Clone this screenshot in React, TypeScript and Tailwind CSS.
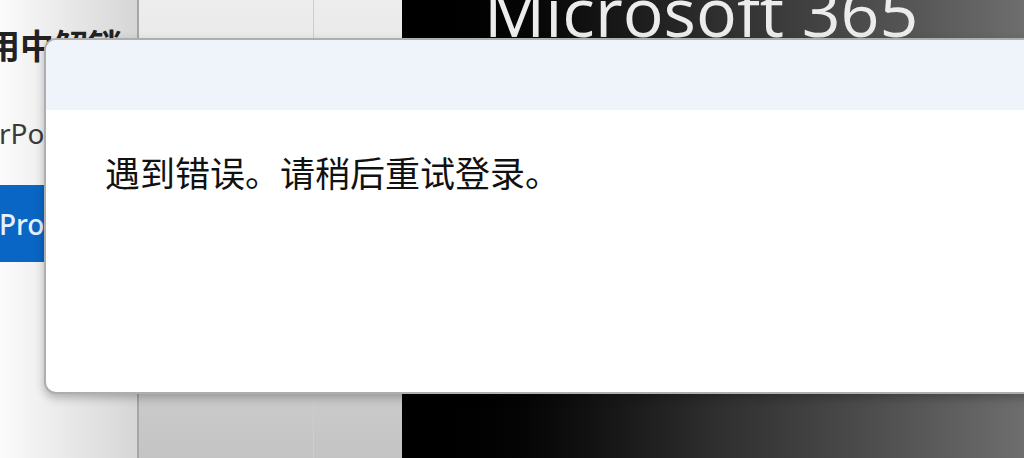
export default function App() {
  return (
    <main className="relative h-[458px] w-[1024px] overflow-hidden bg-white font-['Noto_Sans','Noto_Sans_CJK_SC',sans-serif]">
      {/* 背景：左侧面板 / 中间栏 / 右侧深色横幅 */}
      <div className="flex h-full w-full">
        <div className="flex h-full w-[137px] shrink-0 flex-col overflow-hidden bg-gradient-to-r from-[#fbfbfb] to-[#d6d6d6]">
          <div className="-ml-[14px] mt-[21px] whitespace-nowrap text-[34px] font-bold leading-[48px] text-[#222] font-['Noto_Sans_CJK_SC',sans-serif]">
            用中解锁
          </div>
          <div className="-ml-[1px] mt-[46px] whitespace-nowrap text-[28px] leading-[36px] text-[#3a3a3a]">rPo</div>
          <div className="mt-[34px] flex h-[77px] w-full items-center bg-[#0a66c4]">
            <span className="-ml-[1px] whitespace-nowrap text-[28px] font-medium text-[#e8f0fb]">Pro</span>
          </div>
        </div>
        <div className="h-full w-[2px] shrink-0 bg-[#a6a6a6]" />
        <div className="flex h-full w-[263px] shrink-0 bg-gradient-to-b from-[#ededed] via-[#dcdcdc] to-[#c4c4c4]">
          <div className="h-full w-[175px] border-r border-[#cdcdcd]" />
          <div className="h-full flex-1" />
        </div>
        <div className="relative h-full flex-1 overflow-hidden bg-gradient-to-r from-[#000000] via-[#2e2e2e] to-[#6e6e6e]">
          <div className="-mt-[35px] ml-[82px] whitespace-nowrap font-['Open_Sans',sans-serif] text-[68px] leading-[92px] text-[#ececec]">
            Microsoft 365
          </div>
        </div>
      </div>

      {/* 错误对话框 */}
      <div className="absolute left-[44px] top-[38px] flex h-[356px] w-[1000px] flex-col overflow-hidden rounded-l-[12px] border-2 border-[#8c8c8c]/70 bg-white shadow-[0_4px_10px_rgba(0,0,0,0.25)]">
        <div className="h-[70px] w-full bg-[#eff3fa]" />
        <div className="pl-[59px] pt-[41px]">
          <p className="whitespace-nowrap font-['Noto_Sans_CJK_SC',sans-serif] text-[35px] leading-[42px] text-[#111]">
            遇到错误。请稍后重试登录。
          </p>
        </div>
      </div>
    </main>
  );
}
